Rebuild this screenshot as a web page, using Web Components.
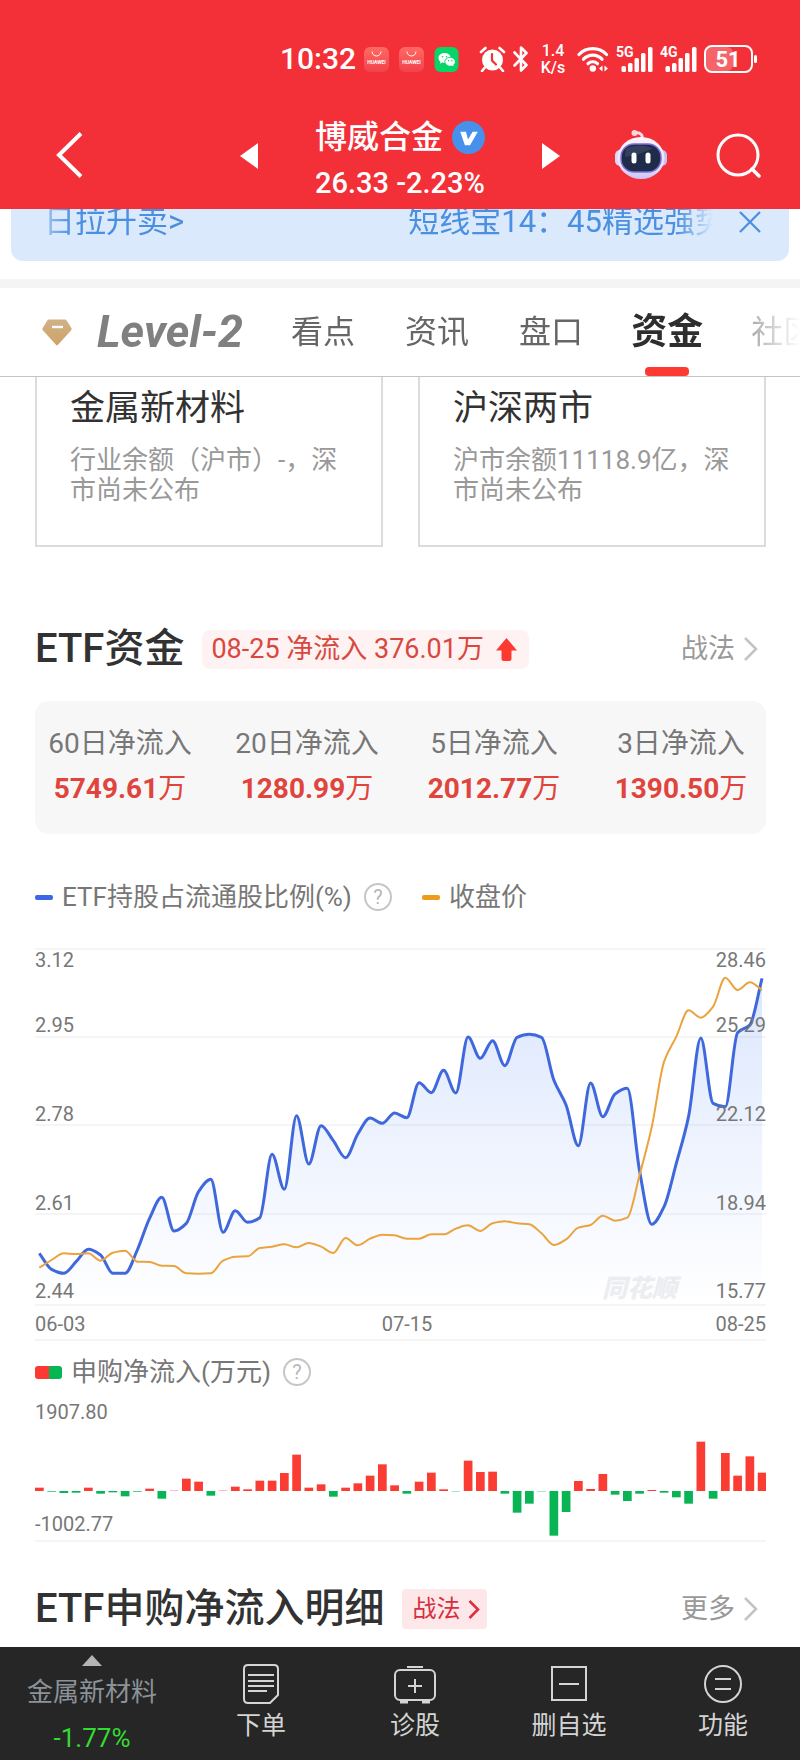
<!DOCTYPE html>
<html lang="zh-CN">
<head>
<meta charset="utf-8">
<meta name="viewport" content="width=device-width, initial-scale=1">
<title>博威合金 - 资金</title>
<style>
  html, body { margin: 0; padding: 0; }
  body { background: #fff; color: #323232; font-family: Roboto, "Noto Sans CJK SC", sans-serif; }
</style>
</head>
<body>
<stock-page></stock-page>

<script>
const RESET = `
  *, *::before, *::after { box-sizing: border-box; }
  button { margin: 0; padding: 0; border: 0; background: none; color: inherit; font: inherit; cursor: pointer; }
  a { color: inherit; text-decoration: none; }
  svg { display: block; }
  h1, h2, h3, p, ul, dl, dd, dt { margin: 0; padding: 0; font-weight: 400; list-style: none; }
`;

function define(name, css, html, ready) {
  const template = document.createElement('template');
  template.innerHTML = `<style>${RESET}${css}</style>${html}`;
  customElements.define(name, class extends HTMLElement {
    connectedCallback() {
      if (this.shadowRoot) return;
      this.attachShadow({ mode: 'open' }).append(template.content.cloneNode(true));
      if (ready) ready(this, this.shadowRoot);
    }
  });
}

/* ---------- phone status bar ---------- */
const huawei = `
  <svg width="25" height="25" viewBox="0 0 25 25">
    <defs><linearGradient id="hw" x1="0" y1="0" x2="0" y2="1"><stop offset="0" stop-color="#ff6a63"/><stop offset="1" stop-color="#f2424b"/></linearGradient></defs>
    <rect width="25" height="25" rx="6" fill="url(#hw)"/>
    <path d="M8 4.500a4.500 4.500 0 0 0 9 0" fill="none" stroke="#fff" stroke-width="1"/>
    <text x="12.500" y="17" font-family="Roboto" font-size="5" font-weight="700" fill="#fff" text-anchor="middle">HUAWEI</text>
  </svg>`;
const signal = gen => `
  <svg width="37" height="28" viewBox="0 0 37 28" fill="#fff">
    <text x="0" y="12" font-family="Roboto" font-size="14" font-weight="700">${gen}</text>
    <rect x="5.500" y="21" width="4.500" height="6" rx="1.500"/><rect x="12" y="18" width="4.500" height="9" rx="1.500"/>
    <rect x="18.500" y="13" width="4.500" height="14" rx="1.500"/><rect x="25" y="8" width="4.500" height="19" rx="1.500"/>
    <rect x="32" y="2" width="4.500" height="25" rx="1.500"/>
  </svg>`;
define('status-bar', `
  :host { display: flex; justify-content: flex-end; align-items: center; height: 100px; padding: 18px 43px 0 0; color: #fff; }
  .time { font-size: 30px; line-height: 40px; font-weight: 500; }
  .apps { display: flex; gap: 10px; margin: 0 20px 0 8px; }
  .sys { display: flex; align-items: center; gap: 7px; }
  .speed { display: flex; flex-direction: column; width: 28px; margin: 0 3px; font-size: 16px; line-height: 17px; font-weight: 500; text-align: center; }
`, `
  <span class="time">10:32</span>
  <span class="apps">${huawei}${huawei}
    <svg width="25" height="25" viewBox="0 0 24 25">
      <rect width="24" height="25" rx="6" fill="#05d667"/>
      <path d="M10 6c-3.500 0-6 2.200-6 5 0 1.600.8 2.900 2 3.800l-.5 1.900 2.200-1.100c.8.2 1.500.3 2.300.3-.5-3.500 2.300-5.900 6-5.900C15.500 7.500 13 6 10 6z" fill="#fff"/>
      <path d="M20.500 14.700c0-2.300-2.200-4-4.900-4s-4.900 1.700-4.900 4 2.200 4 4.900 4c.6 0 1.200-.1 1.800-.3l1.700.9-.4-1.500c1.100-.8 1.800-1.900 1.800-3.100z" fill="#fff"/>
      <g fill="#05d667"><circle cx="8" cy="9.700" r=".8"/><circle cx="12" cy="9.700" r=".8"/><circle cx="14" cy="13.700" r=".7"/><circle cx="17.300" cy="13.700" r=".7"/></g>
    </svg>
  </span>
  <span class="sys">
    <svg width="27" height="26" viewBox="0 0 26 26">
      <circle cx="13" cy="14" r="10.500" fill="#fff"/>
      <path d="M1.500 6 6 2M24.500 6 20 2M5 22l-2.500 3M21 22l2.500 3" stroke="#fff" stroke-width="2.600" stroke-linecap="round"/>
      <path d="M12.500 8v6.500l4 4" fill="none" stroke="#f32f37" stroke-width="2.200" stroke-linecap="round"/>
    </svg>
    <svg width="16" height="26" viewBox="0 0 16 26"><path d="M1.500 6.500 13.500 19 8 24.500V1.500L13.500 7 1.500 19.500" fill="none" stroke="#fff" stroke-width="2.600" stroke-linejoin="round" stroke-linecap="round"/></svg>
    <span class="speed"><span>1.4</span><span>K/s</span></span>
    <svg width="32" height="26" viewBox="0 0 32 26">
      <g fill="none" stroke="#fff" stroke-width="3.200" stroke-linecap="round"><path d="M2 8.500a19 19 0 0 1 27.500 0"/><path d="M6.500 13.200a12.500 12.500 0 0 1 18.500 0"/><path d="M11 17.700a6.800 6.800 0 0 1 9.500 0"/></g>
      <circle cx="15.800" cy="22.500" r="3.200" fill="#fff"/>
      <path d="m25.500 19.500-3.500 3 3.500 3zM27.500 19.500l3.500 3-3.500 3z" fill="#fff"/>
    </svg>
    ${signal('5G')}${signal('4G')}
    <svg width="53" height="28" viewBox="0 0 53 28">
      <rect x="1" y="2" width="28" height="24" rx="6" fill="#fff" opacity=".25"/>
      <rect x="1" y="1" width="47" height="26" rx="7" fill="none" stroke="#fff" stroke-width="2"/>
      <rect x="50" y="10" width="3" height="8" rx="1.500" fill="#fff"/>
      <text x="24" y="22" font-family="Roboto" font-size="22" font-weight="700" fill="#fff" text-anchor="middle">51</text>
    </svg>
  </span>
`);

/* ---------- title bar ---------- */
define('stock-header', `
  :host { display: block; position: sticky; top: 0; z-index: 3; background: #f32f37; color: #fff; }
  nav { display: grid; grid-template-columns: 1fr auto 1fr; align-items: start; padding: 14px 39px 3px; }
  button { display: flex; align-items: center; justify-content: center; height: 84px; }
  .back { width: 40px; margin-left: 11px; }
  .center { display: flex; gap: 57px; }
  .name { display: flex; align-items: center; gap: 9px; font-size: 32px; line-height: 46px; }
  .name h1 { font-size: 32px; font-weight: 500; }
  .price { font-size: 29px; line-height: 46px; font-weight: 500; text-align: center; }
  .right { display: flex; justify-content: flex-end; gap: 47px; }
`, `
  <status-bar></status-bar>
  <nav aria-label="股票">
    <button class="back" aria-label="返回"><svg width="40" height="50" viewBox="0 0 40 50"><path d="M31 2.500 9 24l22 21.500" fill="none" stroke="#fff" stroke-width="4"/></svg></button>
    <div class="center">
      <button aria-label="上一只"><svg width="18" height="26" viewBox="0 0 18 26"><path d="M18 0v26L0 13z" fill="#fff"/></svg></button>
      <div>
        <div class="name"><h1>博威合金</h1>
          <svg width="33" height="33" viewBox="0 0 32 32"><circle cx="16" cy="16" r="16" fill="#4791ec"/><path d="M8 10.500h5.500l2 7.500 4.500-7.500h5L17.500 23.500h-5z" fill="#fff"/></svg>
        </div>
        <p class="price">26.33 -2.23%</p>
      </div>
      <button aria-label="下一只"><svg width="18" height="26" viewBox="0 0 18 26"><path d="M0 0v26l18-13z" fill="#fff"/></svg></button>
    </div>
    <div class="right">
      <button aria-label="智能助手">
        <svg width="54" height="52" viewBox="0 0 54 52">
          <defs><linearGradient id="head" x1="0" y1="0" x2="0" y2="1"><stop offset="0" stop-color="#fbf4fb"/><stop offset=".7" stop-color="#e9e2fa"/><stop offset="1" stop-color="#c9c4f6"/></linearGradient></defs>
          <path d="M28 9c1-4-1-6-6-6.500" fill="none" stroke="#f3dcea" stroke-width="3" stroke-linecap="round"/>
          <circle cx="20.500" cy="3" r="3" fill="#f7d5dc"/>
          <rect x="1" y="20" width="10" height="16" rx="5" fill="#dcd7fa"/><rect x="43" y="20" width="10" height="16" rx="5" fill="#c5c0f5"/>
          <ellipse cx="27" cy="28" rx="23.500" ry="21" fill="url(#head)"/>
          <rect x="7" y="14" width="40" height="28" rx="13" fill="#202a49" stroke="#7a6fd8" stroke-width="1.500"/>
          <path d="M12 18q14-5 27 0-10 6-28 9z" fill="#3c4865" opacity=".7"/>
          <rect x="17.500" y="22.500" width="5" height="11" rx="2.500" fill="#fff"/><rect x="31.500" y="22.500" width="5" height="11" rx="2.500" fill="#fff"/>
        </svg>
      </button>
      <button aria-label="搜索"><svg width="46" height="46" viewBox="0 0 46 46"><circle cx="23" cy="22" r="20" fill="none" stroke="#fff" stroke-width="3"/><path d="m37 36 7 7" stroke="#fff" stroke-width="3.500" stroke-linecap="round"/></svg></button>
    </div>
  </nav>
`);

/* ---------- scrolling notice, partly under the title bar ---------- */
define('notice-banner', `
  :host { display: flex; align-items: center; height: 78px; margin: -26px 11px 0; padding: 0 28px 0 33px; border-radius: 12px; background: #dae9fc; color: #4a8fe0; }
  .lane { flex: 1; min-width: 0; display: flex; gap: 224px; overflow: hidden; white-space: nowrap; font-size: 31px; line-height: 44px;
    -webkit-mask-image: linear-gradient(90deg, rgba(0,0,0,.4), #000 28px calc(100% - 36px), transparent);
    mask-image: linear-gradient(90deg, rgba(0,0,0,.4), #000 28px calc(100% - 36px), transparent); }
  button { margin-left: 26px; }
`, `
  <div class="lane"><a href="#sell">日拉升卖&gt;</a><a href="#pick">短线宝14：45精选强势</a></div>
  <button aria-label="关闭"><svg width="22" height="22" viewBox="0 0 22 22"><path d="m1 1 20 20M21 1 1 21" stroke="#4a8fe0" stroke-width="2.200"/></svg></button>
`);

/* ---------- tabs ---------- */
define('section-tabs', `
  :host { display: block; position: relative; z-index: 2; margin-top: 18px; border-top: 9px solid #f4f4f4; border-bottom: 1px solid #c4c4c4; background: #fff; }
  nav { display: flex; align-items: center; gap: 46px; height: 88px; padding-left: 42px; overflow: hidden; white-space: nowrap; color: #666; font-size: 32px; line-height: 46px;
    -webkit-mask-image: linear-gradient(90deg, #000 calc(100% - 90px), transparent);
    mask-image: linear-gradient(90deg, #000 calc(100% - 90px), transparent); }
  a { flex: none; padding: 0 2px; }
  .level { display: flex; align-items: center; gap: 25px; padding: 0; color: #808080; font-size: 45px; font-style: italic; font-weight: 700; }
  .on { position: relative; padding: 0; color: #2e2e2e; font-size: 36px; line-height: 88px; font-weight: 700; }
  .on::after { content: ""; position: absolute; left: 50%; bottom: 0; width: 44px; height: 9px; margin-left: -22px; border-radius: 4px; background: #fc3a32; }
`, `
  <nav aria-label="栏目">
    <a class="level" href="#level2">
      <svg width="30" height="27" viewBox="0 0 30 27"><defs><linearGradient id="gem" x1="0" y1="0" x2="0" y2="1"><stop offset="0" stop-color="#d0b288"/><stop offset="1" stop-color="#cfa265"/></linearGradient></defs>
        <path d="M7 0.500h16q1 0 1.500.8l5 8q.5 1-.3 1.900L16 25.800q-1 1-2 0L.8 11.200Q0 10.300.5 9.300l5-8Q6 .5 7 .5z" fill="url(#gem)"/><path d="M10 8h11" stroke="#fff" stroke-width="2.400"/></svg>
      <span>Level-2</span></a>
    <a href="#view">看点</a><a href="#news">资讯</a><a href="#depth">盘口</a><a class="on" href="#fund" aria-current="page">资金</a><a href="#club">社区</a>
  </nav>
`);

/* ---------- market cards ---------- */
define('market-card', `
  :host { display: block; padding: 30px 26px 40px 33px; border: 2px solid #dcdcdc; }
  h3 { font-size: 35px; line-height: 44px; color: #323232; }
  p { margin-top: 14px; font-size: 26px; line-height: 30px; color: #999; }
`, `<h3><slot name="title"></slot></h3><p><slot></slot></p>`);

/* ---------- section heading ---------- */
define('section-head', `
  :host { display: flex; align-items: center; height: 48px; }
  h2 { margin-right: 18px; font-size: 40px; line-height: 48px; font-weight: 500; color: #323232; }
  .more { display: flex; align-items: center; gap: 8px; margin-left: auto; padding-right: 8px; font-size: 27px; line-height: 40px; color: #999; }
`, `
  <h2><slot name="title"></slot></h2><slot></slot>
  <a class="more" href="#more"><slot name="more"></slot><svg width="15" height="24" viewBox="0 0 15 24"><path d="m2 1 11 11L2 23" fill="none" stroke="#c4c4c4" stroke-width="2.600"/></svg></a>
`);
define('flow-chip', `
  :host { display: flex; align-items: center; gap: 12px; height: 39px; padding: 0 12px 0 9px; border-radius: 8px; background: #fff2f2; color: #d8483f; font-size: 27px; line-height: 38px; }
`, `<span><slot></slot></span><svg width="21" height="23" viewBox="0 0 21 23"><path d="M10.500 0 21 12.500h-5.500V21q0 2-2 2h-6q-2 0-2-2v-8.500H0z" fill="#fc3a32"/></svg>`);
define('tactic-chip', `
  :host { display: block; }
  a { display: flex; align-items: center; gap: 8px; height: 40px; padding: 0 7px 0 10px; border-radius: 4px; background: #fee7e9; color: #d6303f; font-size: 24px; line-height: 40px; }
`, `<a href="#tactic"><slot></slot><svg width="12" height="19" viewBox="0 0 12 19"><path d="m1.500 1 8.500 8.500L1.500 18" fill="none" stroke="#e02f40" stroke-width="2.600"/></svg></a>`);

/* ---------- net inflow summary ---------- */
define('flow-stats', `
  :host { display: block; border-radius: 14px; background: #f7f7f7; }
  dl { display: grid; grid-template-columns: repeat(4, 146px); justify-content: space-between; padding: 23px 12px 21px; text-align: center; white-space: nowrap; }
  dt { font-size: 28px; line-height: 40px; color: #777; }
  dd { margin-top: 1px; font-size: 28px; line-height: 48px; font-weight: 700; color: #e0443c; }
  span { font-weight: 400; }
`, `<dl></dl>`, (host, root) => {
  root.querySelector('dl').innerHTML = [['60', '5749.61'], ['20', '1280.99'], ['5', '2012.77'], ['3', '1390.50']]
    .map(([days, sum]) => `<div><dt>${days}日净流入</dt><dd>${sum}<span>万</span></dd></div>`).join('');
});

/* ---------- legends ---------- */
define('legend-row', `
  :host { display: flex; align-items: center; height: 36px; font-size: 26px; line-height: 36px; color: #777; white-space: nowrap; }
`, `<slot></slot>`);
define('legend-item', `
  :host { display: flex; align-items: center; gap: 9px; }
  :host([kind="price"]) { margin-left: 30px; }
  i { width: 18px; height: 5px; border-radius: 2px; background: #3c67e8; }
  :host([kind="price"]) i { background: #f09a1c; }
  :host([kind="bars"]) i { width: 27px; height: 13px; border-radius: 3px; background: linear-gradient(90deg, #fc3a32 50%, #05b652 50%); }
`, `<i></i><span><slot></slot></span>`);
define('help-button', `
  :host { display: block; margin-left: 12px; }
  button { display: block; width: 28px; height: 28px; border: 2px solid #c6c6c6; border-radius: 50%; color: #b8b8b8; font-size: 20px; line-height: 24px; text-align: center; }
`, `<button aria-label="说明">?</button>`);

/* ---------- charts ---------- */
const STEP = 12.25, FIRST = 4.3, WIDTH = 731;
const xAt = i => FIRST + STEP * i;
const ratio = [970,1018,1030,995,958,975,1030,1030,960,865,802,903,880,785,748,907,842,877,863,673,778,557,702,587,632,683,612,564,580,549,
  563,458,488,421,489,321,385,332,407,322,313,322,450,525,647,459,560,492,475,722,883,830,700,560,324,520,530,308,285,145];
const close = [1013,990,970,972,970,992,968,962,995,996,1007,1008,1030,1031,1030,992,980,979,954,950,943,952,939,950,969,924,946,926,914,916,
  926,926,913,913,896,886,903,880,874,880,883,910,945,928,893,885,857,872,863,735,590,395,320,241,263,230,143,180,157,180];
const inflow = [10,-2,-6,-5,10,-8,-4,-16,-2,7,-23,1,37,28,-14,1,13,5,31,31,54,109,10,20,-17,10,23,46,80,17,
  -8,28,55,5,-1,91,57,58,-8,-65,-38,-1,-134,-63,30,6,51,-11,-30,-8,3,-5,-19,-38,148,-23,114,46,104,55];

/* monotone cubic curve through the samples */
function curve(samples) {
  const y = samples.map(v => v / 3 - 10);
  const slope = y.slice(1).map((v, i) => v - y[i]);
  const m = y.map((_, i) => {
    if (i === 0) return slope[0];
    if (i === y.length - 1) return slope[i - 1];
    const a = slope[i - 1], b = slope[i];
    return a * b <= 0 ? 0 : 2 * a * b / (a + b);
  });
  let d = `M${xAt(0)} ${y[0]}`;
  for (let i = 1; i < y.length; i++) {
    d += `C${xAt(i - 1) + STEP / 3} ${y[i - 1] + m[i - 1] / 3} ${xAt(i) - STEP / 3} ${y[i] - m[i] / 3} ${xAt(i)} ${y[i]}`;
  }
  return d;
}
const CHART_CSS = `
  :host { display: block; }
  svg { width: 100%; height: auto; }
  text { font-family: Roboto, "Noto Sans CJK SC", sans-serif; font-size: 20px; fill: #777; }
  .end { text-anchor: end; } .mid { text-anchor: middle; }
  .grid { stroke: #f2f2f2; stroke-width: 1.500; }
  .mark { font-size: 25px; font-weight: 900; font-style: italic; fill: #eeeef0; }
`;
define('ratio-chart', CHART_CSS, `<svg viewBox="0 0 731 405" role="img" aria-label="ETF持股占流通股比例与收盘价"></svg>`, (host, root) => {
  const line = curve(ratio);
  const left = ['3.12', '2.95', '2.78', '2.61', '2.44'], right = ['28.46', '25.29', '22.12', '18.94', '15.77'];
  const base = [27, 92, 181, 270, 358];
  root.querySelector('svg').innerHTML = `
    <defs><linearGradient id="fill" x1="0" y1="0" x2="0" y2="1"><stop offset="0" stop-color="#3c78f5" stop-opacity=".18"/><stop offset="1" stop-color="#3c78f5" stop-opacity="0"/></linearGradient></defs>
    ${[9, 97, 185, 274, 365, 400].map(y => `<path class="grid" d="M0 ${y}H${WIDTH}"/>`).join('')}
    <text class="mark" x="567" y="357">同花顺</text>
    <path d="${line}V365H${xAt(0)}Z" fill="url(#fill)"/>
    <path d="${line}" fill="none" stroke="#3f68dc" stroke-width="3"/>
    <path d="${curve(close)}" fill="none" stroke="#eba33d" stroke-width="2"/>
    ${base.map((y, i) => `<text x="0" y="${y}">${left[i]}</text><text class="end" x="${WIDTH}" y="${y}">${right[i]}</text>`).join('')}
    <text x="0" y="391">06-03</text><text class="mid" x="372" y="391">07-15</text><text class="end" x="${WIDTH}" y="391">08-25</text>`;
});
define('inflow-chart', CHART_CSS, `<svg viewBox="0 0 731 150" role="img" aria-label="申购净流入"></svg>`, (host, root) => {
  root.querySelector('svg').innerHTML = inflow.map((v, i) => {
    const h = Math.abs(v) / 3;
    return `<rect x="${xAt(i) - 4.3}" y="${v > 0 ? 96 - h : 96}" width="8.700" height="${h}" fill="${v > 0 ? '#fa3c33' : '#08b454'}"/>`;
  }).join('') + `<text x="0" y="24">1907.80</text><text x="0" y="136">-1002.77</text><path class="grid" d="M0 146H${WIDTH}"/>`;
});

/* ---------- bottom bar ---------- */
define('bottom-bar', `
  :host { display: block; position: sticky; bottom: 0; z-index: 3; background: #262626; color: #d4d4d4; }
  nav { display: grid; grid-template-columns: 184px repeat(4, 1fr); height: 113px; }
  button { display: flex; flex-direction: column; align-items: center; font-size: 25px; line-height: 36px; }
  .act { padding-top: 16px; gap: 3px; }
  .sector { padding-top: 8px; font-size: 26px; }
  .sector svg { margin-bottom: 8px; }
  .sector span { color: #8b9298; }
  .sector b { margin-top: 10px; font-weight: 400; color: #32dc32; }
  .line { fill: none; stroke: #d4d4d4; stroke-width: 2; }
`, `
  <nav aria-label="操作">
    <button class="sector"><svg width="20" height="11" viewBox="0 0 20 11"><path d="M10 0 20 11H0z" fill="#b4b4b4"/></svg><span>金属新材料</span><b>-1.77%</b></button>
    <button class="act"><svg class="line" width="42" height="42" viewBox="0 0 42 42"><path d="M8 2h26q4 0 4 4v26l-8 8H8q-4 0-4-4V6q0-4 4-4z"/><path d="M8 12h26M8 18h26M8 23h26M8 28h19"/></svg>下单</button>
    <button class="act"><svg class="line" width="42" height="42" viewBox="0 0 42 42"><rect x="1" y="7" width="40" height="30" rx="5"/><path d="M13 4h16M14 23h14M21 16v14"/><path d="M6 39h8M28 39h8" stroke-width="3"/></svg>诊股</button>
    <button class="act"><svg class="line" width="42" height="42" viewBox="0 0 42 42"><path d="M4 4h34v33H4zM11 21h20"/></svg>删自选</button>
    <button class="act"><svg class="line" width="42" height="42" viewBox="0 0 42 42"><circle cx="21" cy="21" r="18"/><path d="M13 16h16M13 26h16"/></svg>功能</button>
  </nav>
`);

/* ---------- page ---------- */
define('stock-page', `
  :host { display: flex; flex-direction: column; min-height: 100vh; }
  main { flex: 1; padding: 0 34px 13px 35px; }
  .cards { display: grid; grid-template-columns: 1fr 1fr; gap: 35px; margin-top: -22px; }
  .fund { margin-top: 78px; }
  flow-stats { margin-top: 28px; }
  .first { margin-top: 45px; }
  ratio-chart { margin-top: 25px; }
  .second { margin-top: 9px; }
  inflow-chart { margin-top: 5px; }
  .detail { margin-top: 40px; }
`, `
  <stock-header></stock-header>
  <notice-banner></notice-banner>
  <section-tabs></section-tabs>
  <main>
    <div class="cards">
      <market-card><span slot="title">金属新材料</span>行业余额（沪市）-，深市尚未公布</market-card>
      <market-card><span slot="title">沪深两市</span>沪市余额11118.9亿，深市尚未公布</market-card>
    </div>
    <section-head class="fund"><span slot="title">ETF资金</span><flow-chip>08-25 净流入 376.01万</flow-chip><span slot="more">战法</span></section-head>
    <flow-stats></flow-stats>
    <legend-row class="first"><legend-item>ETF持股占流通股比例(%)</legend-item><help-button></help-button><legend-item kind="price">收盘价</legend-item></legend-row>
    <ratio-chart></ratio-chart>
    <legend-row class="second"><legend-item kind="bars">申购净流入(万元)</legend-item><help-button></help-button></legend-row>
    <inflow-chart></inflow-chart>
    <section-head class="detail"><span slot="title">ETF申购净流入明细</span><tactic-chip>战法</tactic-chip><span slot="more">更多</span></section-head>
  </main>
  <bottom-bar></bottom-bar>
`);
</script>
</body>
</html>
